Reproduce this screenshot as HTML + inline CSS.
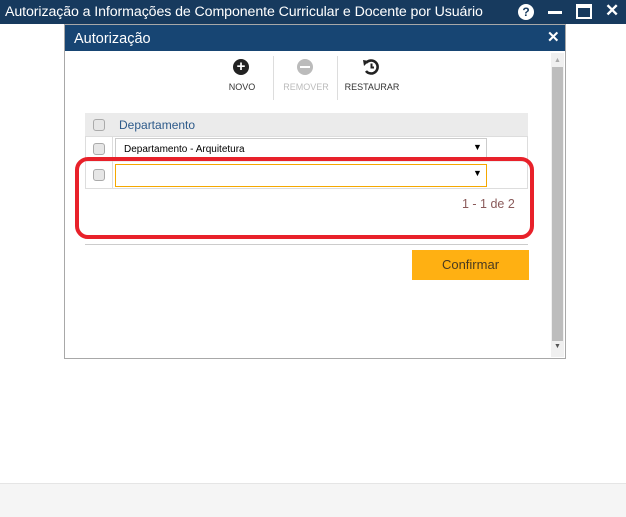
<!DOCTYPE html>
<html><head><meta charset="utf-8"><style>
*{box-sizing:border-box;margin:0;padding:0}
body{width:626px;height:517px;background:#fff;font-family:"Liberation Sans",sans-serif;position:relative;overflow:hidden}
.abs{position:absolute}
.top{left:0;top:0;width:626px;height:24px;background:#173a5e;color:#fff;font-size:14.2px;line-height:24px;padding-left:5px;letter-spacing:-0.1px}
.dlg{left:64px;top:24px;width:502px;height:335px;border:1px solid #a8a8a8;background:#fff}
.dh{left:0;top:0;width:500px;height:26px;background:#174573;color:#fff;font-size:14.5px;line-height:28px;padding-left:9px}
.cb{width:12px;height:12px;border:1px solid #aaa;border-radius:3px;background:#e6e6e6}
.lbl{font-size:9px;color:#333;text-align:center;width:60px}
</style></head><body>
<div class="abs top">Autorização a Informações de Componente Curricular e Docente por Usuário</div>
<div class="abs" style="left:518px;top:4px;width:16px;height:16px;border-radius:50%;background:#fff;color:#173a5e;font-size:12px;font-weight:bold;text-align:center;line-height:16px">?</div>
<div class="abs" style="left:548px;top:11px;width:14px;height:3px;background:#fff"></div>
<div class="abs" style="left:576px;top:4px;width:16px;height:15px;border:2px solid #fff;border-top-width:4px"></div>
<div class="abs" style="left:605px;top:1px;color:#fff;font-size:17px;font-weight:bold">✕</div>
<div class="abs" style="left:0;top:483px;width:626px;height:34px;background:#f5f5f5;border-top:1px solid #e5e5e5"></div>

<div class="abs dlg">
<div class="abs dh">Autorização</div>
<div class="abs" style="left:482px;top:3px;color:#fff;font-size:15px;font-weight:bold">✕</div>
<div class="abs" style="left:486px;top:28px;width:13px;height:304px;background:#f0f0f0"></div>
<div class="abs" style="left:487px;top:42px;width:11px;height:274px;background:#bdbdbd"></div>
<div class="abs" style="left:489px;top:32px;font-size:7px;color:#aaa">▲</div>
<div class="abs" style="left:489px;top:318px;font-size:7px;color:#555">▼</div>

<div class="abs" style="left:168px;top:34px;width:16px;height:16px;border-radius:50%;background:#222;color:#fff;font-weight:bold;font-size:15px;line-height:16px;text-align:center">+</div>
<div class="abs lbl" style="left:147px;top:57px">NOVO</div>
<div class="abs" style="left:208px;top:31px;width:1px;height:44px;background:#ddd"></div>
<div class="abs" style="left:232px;top:34px;width:16px;height:16px;border-radius:50%;background:#bbb"><div style="margin:7px 3px;width:10px;height:2px;background:#fff"></div></div>
<div class="abs lbl" style="left:211px;top:57px;color:#bbb">REMOVER</div>
<div class="abs" style="left:272px;top:31px;width:1px;height:44px;background:#ddd"></div>
<svg class="abs" style="left:297px;top:33px" width="18" height="18" viewBox="0 0 18 18"><path d="M4 5 A6.5 6.5 0 1 1 4 13" fill="none" stroke="#222" stroke-width="2.6"/><path d="M1 2 L7 3 L2 8 Z" fill="#222"/><path d="M9.5 5.5 V9.5 H12" fill="none" stroke="#222" stroke-width="2"/></svg>
<div class="abs lbl" style="left:277px;top:57px">RESTAURAR</div>
</div>

<div class="abs" style="left:85px;top:113px;width:443px;height:23px;background:#ebebeb"></div>
<div class="abs cb" style="left:93px;top:119px"></div>
<div class="abs" style="left:119px;top:118px;font-size:12px;color:#2d5a8a">Departamento</div>
<div class="abs" style="left:85px;top:136px;width:443px;height:53px;border:1px solid #ddd"></div>
<div class="abs" style="left:85px;top:161px;width:443px;height:1px;background:#eee"></div>
<div class="abs" style="left:112px;top:136px;width:1px;height:53px;background:#ddd"></div>
<div class="abs cb" style="left:93px;top:143px"></div>
<div class="abs cb" style="left:93px;top:169px"></div>
<div class="abs" style="left:115px;top:138px;width:372px;height:22px;border:1px solid #ccc;font-size:10px;color:#000;padding:5px 8px">Departamento - Arquitetura</div>
<div class="abs" style="left:473px;top:142px;font-size:9px">▼</div>
<div class="abs" style="left:115px;top:164px;width:372px;height:23px;border:1px solid #f5a800"></div>
<div class="abs" style="left:473px;top:168px;font-size:9px">▼</div>
<div class="abs" style="left:462px;top:197px;font-size:12.5px;color:#8a5a5a">1 - 1 de 2</div>
<div class="abs" style="left:75px;top:157px;width:459px;height:82px;border:4px solid #e8212a;border-radius:13px"></div>
<div class="abs" style="left:85px;top:244px;width:443px;height:1px;background:#ccc"></div>
<div class="abs" style="left:412px;top:250px;width:117px;height:30px;background:#ffb012;font-size:13px;color:#4a3a20;text-align:center;line-height:30px">Confirmar</div>
</body></html>
